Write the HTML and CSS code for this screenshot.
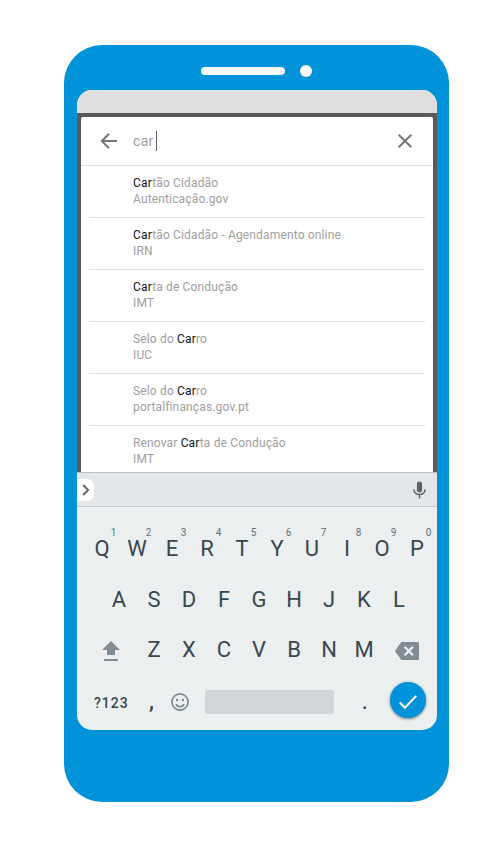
FILE: index.html
```html
<!DOCTYPE html>
<html lang="pt">
<head>
<meta charset="utf-8">
<title>Pesquisa</title>
<link rel="stylesheet" href="styles.css">
</head>
<body>
<div class="phone">
  <div class="speaker"><span class="slot"></span><span class="sensor"></span></div>
  <div class="screen">
    <div class="status"></div>
    <div class="backdrop">
      <div class="panel">
        <div class="search">
          <svg class="back" width="18" height="16" viewBox="0 0 18 16"><path d="M9 .8 1.8 8 9 15.2M2 8h15" /></svg>
          <span class="query">car</span><span class="caret"></span>
          <svg class="clear" width="14" height="14" viewBox="0 0 14 14"><path d="M.7.7l12.6 12.6M13.3.7.7 13.3" /></svg>
        </div>
        <ul class="results">
          <li><p><b>Car</b>tão Cidadão</p><p>Autenticação.gov</p></li>
          <li><p><b>Car</b>tão Cidadão - Agendamento online</p><p>IRN</p></li>
          <li><p><b>Car</b>ta de Condução</p><p>IMT</p></li>
          <li><p>Selo do <b>Car</b>ro</p><p>IUC</p></li>
          <li><p>Selo do <b>Car</b>ro</p><p>portalfinanças.gov.pt</p></li>
          <li><p>Renovar <b>Car</b>ta de Condução</p><p>IMT</p></li>
        </ul>
      </div>
    </div>
    <div class="suggest">
      <span class="expand"><svg width="8" height="12" viewBox="0 0 8 12"><path d="M1.2 1 6.2 6l-5 5" /></svg></span>
      <svg class="mic" width="13" height="18" viewBox="0 0 13 18"><rect x="3.9" y=".5" width="5.2" height="10.8" rx="2.6" /><path d="M.9 8.3c0 3.2 2.4 5.2 5.6 5.2s5.6-2 5.6-5.2M6.5 13.5v4" /></svg>
    </div>
    <div class="keyboard">
      <div class="row">
        <span class="key">Q<i>1</i></span><span class="key">W<i>2</i></span><span class="key">E<i>3</i></span><span class="key">R<i>4</i></span><span class="key">T<i>5</i></span><span class="key">Y<i>6</i></span><span class="key">U<i>7</i></span><span class="key">I<i>8</i></span><span class="key">O<i>9</i></span><span class="key">P<i>0</i></span>
      </div>
      <div class="row">
        <span class="key">A</span><span class="key">S</span><span class="key">D</span><span class="key">F</span><span class="key">G</span><span class="key">H</span><span class="key">J</span><span class="key">K</span><span class="key">L</span>
      </div>
      <div class="row letters-low">
        <span class="wide"><svg width="18" height="20" viewBox="0 0 18 20"><path d="M9 0 18 9h-5v5H5V9H0zM2 18h14v2H2z" /></svg></span>
        <span class="key">Z</span><span class="key">X</span><span class="key">C</span><span class="key">V</span><span class="key">B</span><span class="key">N</span><span class="key">M</span>
        <span class="wide"><svg width="24" height="18" viewBox="0 0 24 18"><path d="M7 0h15.500q1.500 0 1.500 1.500v15q0 1.500-1.500 1.500H7q-.7 0-1.200-.7L0 9 5.800.7Q6.300 0 7 0z" /><path class="cross" d="m9.600 4.800 8.400 8.400M18 4.800l-8.400 8.400" /></svg></span>
      </div>
      <div class="row bottom">
        <span class="symbols">?123</span>
        <span class="comma">,</span>
        <svg class="smile" width="18" height="18" viewBox="0 0 18 18"><circle class="face" cx="9" cy="9" r="8.100" /><circle cx="6.100" cy="7" r="1.200" /><circle cx="11.900" cy="7" r="1.200" /><path class="face" d="M5 11.200c.8 1.700 2.300 2.500 4 2.500s3.200-.8 4-2.500" /></svg>
        <span class="space"></span>
        <span class="dot">.</span>
        <span class="enter"><svg width="18" height="14" viewBox="0 0 18 14"><path d="m.8 7.500 5.200 5.200L17.200.9" /></svg></span>
      </div>
    </div>
  </div>
</div>
</body>
</html>
```
FILE: styles.css
```css
* { box-sizing: border-box; margin: 0; padding: 0; }
body { background: #fff; font-family: Roboto, sans-serif; padding: 45px 0 0 64px; }
svg { display: block; flex: none; fill: none; }
.phone { width: 385px; height: 757px; border-radius: 38px; background: #0093d9; padding: 0 12px 0 13px; }
.speaker { height: 45px; display: flex; align-items: center; gap: 15px; padding: 7px 0 0 124px; }
.slot { width: 84px; height: 8px; border-radius: 4px; background: #fafafa; }
.sensor { width: 12px; height: 12px; border-radius: 50%; background: #fafafa; }
.screen { width: 360px; height: 640px; border-radius: 15px; overflow: hidden; background: #ebeff0; }
.status { height: 23px; background: #e0e0e0; }
.backdrop { height: 359px; background: #5a5a5a; padding: 4px 4px 0; }
.panel { height: 355px; background: #fff; border-radius: 2px 2px 0 0; overflow: hidden; }
.search { height: 49px; border-bottom: 1px solid #e0e0e0; display: flex; align-items: center; padding: 0 21px 0 19px; }
.back { stroke: #757575; stroke-width: 2; }
.query { margin-left: 15px; width: 23px; font-size: 14px; letter-spacing: .3px; color: #9e9e9e; }
.caret { width: 1px; height: 20px; background: #616161; }
.clear { margin-left: auto; stroke: #757575; stroke-width: 2; }
.results { list-style: none; padding: 0 8px; }
.results li { height: 52px; padding: 9px 0 0 44px; border-bottom: 1px solid #e0e0e0; font-size: 12px; line-height: 16px; letter-spacing: .15px; color: #9e9e9e; white-space: nowrap; }
.results b { font-weight: 400; color: #111; }
.suggest { height: 35px; background: #e3e7ea; border-top: 1px solid #bdbdbd; border-bottom: 1px solid #c6c8c9; display: flex; align-items: center; justify-content: space-between; padding-right: 11px; }
.expand { width: 17px; height: 22px; margin-top: 1px; background: #fff; border-radius: 0 7px 7px 0; display: flex; align-items: center; padding-left: 5px; }
.expand svg { stroke: #616161; stroke-width: 1.8; }
.mic { stroke: #616161; stroke-width: 1.5; }
.mic rect { fill: #616161; stroke: none; }
.keyboard { height: 223px; padding-top: 16px; color: #37474f; }
.row { height: 51px; display: flex; justify-content: center; align-items: center; padding-right: 0; }
.row:nth-child(1) { padding-left: 5px; }
.row:nth-child(2) { padding-left: 4px; }
.key { position: relative; width: 35px; text-align: center; font-size: 22px; line-height: 26px; }
.key i { position: absolute; left: 23px; top: -9px; width: 12px; font-size: 10px; line-height: 12px; font-style: normal; color: #607078; }
.letters-low { height: 49px; padding-left: 4px; }
.wide { width: 51px; display: flex; justify-content: center; padding-top: 3px; }
.wide svg { fill: #808c91; }
.wide .cross { stroke: #ebeff0; stroke-width: 2.200; }
.bottom { height: 56px; justify-content: flex-start; padding-left: 17px; }
.symbols { width: 55px; font-size: 14px; font-weight: 500; letter-spacing: 1px; padding-top: 2px; }
.comma { width: 22px; font-size: 22px; font-weight: 500; line-height: 24px; }
.smile { fill: #78868c; }
.smile .face { fill: none; stroke: #78868c; stroke-width: 1.600; }
.space { width: 129px; height: 24px; margin-left: 16px; border-radius: 2px; background: #d1d5d8; }
.dot { width: 28px; margin-left: 28px; font-size: 20px; font-weight: 500; line-height: 24px; }
.enter { width: 36px; height: 36px; margin-top: -4px; border-radius: 50%; background: #0093d9; box-shadow: 0 1px 3px rgba(0,0,0,.5); display: flex; align-items: center; justify-content: center; padding-top: 3px; }
.enter svg { stroke: #fff; stroke-width: 2; }
```
